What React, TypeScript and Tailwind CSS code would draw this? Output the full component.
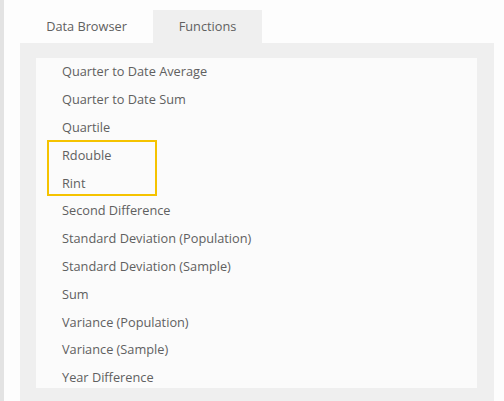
const functions = [
  'Quarter to Date Average',
  'Quarter to Date Sum',
  'Quartile',
  'Rdouble',
  'Rint',
  'Second Difference',
  'Standard Deviation (Population)',
  'Standard Deviation (Sample)',
  'Sum',
  'Variance (Population)',
  'Variance (Sample)',
  'Year Difference',
]

export default function App() {
  return (
    <div
      className="flex h-[401px] w-full overflow-hidden bg-[#fdfdfd] text-[12.75px] text-[#606060]"
      style={{ fontFamily: '"Open Sans", "Noto Sans", sans-serif' }}
    >
      <div className="w-[4px] shrink-0 bg-[#e3e3e3]" />
      <div className="flex flex-col pl-[16px] pt-[10px]">
        <div className="flex h-[33px]">
          <div className="flex w-[133px] items-center justify-center">Data Browser</div>
          <div className="flex w-[109px] items-center justify-center bg-[#efefef]">Functions</div>
        </div>
        <div className="w-[474px] flex-1 bg-[#efefef] pl-[16px] pr-[17px] pt-[15px]">
          <div className="relative h-[330px] overflow-hidden bg-[#fbfbfb] pl-[26px]">
            {functions.map((name) => (
              <div key={name} className="flex h-[27.8px] items-center">
                {name}
              </div>
            ))}
            <div className="absolute left-[11px] top-[82px] h-[56px] w-[110px] border-2 border-[#f5c300]" />
          </div>
        </div>
      </div>
    </div>
  )
}
